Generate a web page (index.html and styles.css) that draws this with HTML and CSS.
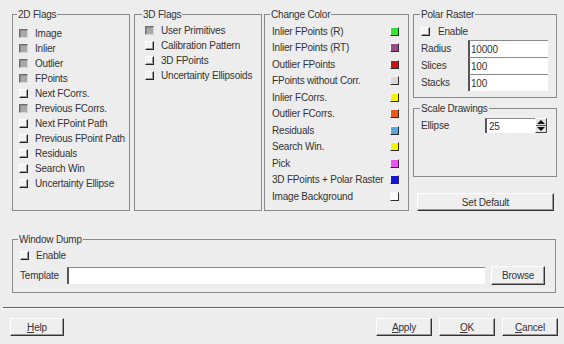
FILE: index.html
```html
<!DOCTYPE html>
<html lang="en">
<head>
    <meta charset="UTF-8">
    <meta name="viewport" content="width=device-width, initial-scale=1.0">
    <title>Drawing Options</title>
    <link rel="stylesheet" href="styles.css">
</head>
<body>
<div class="dialog">
    <div class="top">
        <fieldset class="group flags2d">
            <legend>2D Flags</legend>
            <div class="list">
                <div class="row"><span class="cb on"></span>Image</div>
                <div class="row"><span class="cb on"></span>Inlier</div>
                <div class="row"><span class="cb on"></span>Outlier</div>
                <div class="row"><span class="cb on"></span>FPoints</div>
                <div class="row"><span class="cb"></span>Next FCorrs.</div>
                <div class="row"><span class="cb on"></span>Previous FCorrs.</div>
                <div class="row"><span class="cb"></span>Next FPoint Path</div>
                <div class="row"><span class="cb"></span>Previous FPoint Path</div>
                <div class="row"><span class="cb"></span>Residuals</div>
                <div class="row"><span class="cb"></span>Search Win</div>
                <div class="row"><span class="cb"></span>Uncertainty Ellipse</div>
            </div>
        </fieldset>

        <fieldset class="group flags3d">
            <legend>3D Flags</legend>
            <div class="list">
                <div class="row"><span class="cb on"></span>User Primitives</div>
                <div class="row"><span class="cb"></span>Calibration Pattern</div>
                <div class="row"><span class="cb"></span>3D FPoints</div>
                <div class="row"><span class="cb"></span>Uncertainty Ellipsoids</div>
            </div>
        </fieldset>

        <fieldset class="group colors">
            <legend>Change Color</legend>
            <div class="list">
                <div class="crow">Inlier FPoints (R)<span class="sw" style="background:#33e533"></span></div>
                <div class="crow">Inlier FPoints (RT)<span class="sw" style="background:#984a88"></span></div>
                <div class="crow">Outlier FPoints<span class="sw" style="background:#c81414"></span></div>
                <div class="crow">FPoints without Corr.<span class="sw" style="background:#d9d9d9"></span></div>
                <div class="crow">Inlier FCorrs.<span class="sw" style="background:#f4f400"></span></div>
                <div class="crow">Outlier FCorrs.<span class="sw" style="background:#e65a1e"></span></div>
                <div class="crow">Residuals<span class="sw" style="background:#5ca6de"></span></div>
                <div class="crow">Search Win.<span class="sw" style="background:#f4f400"></span></div>
                <div class="crow">Pick<span class="sw" style="background:#ec52ec"></span></div>
                <div class="crow">3D FPoints + Polar Raster<span class="sw" style="background:#1212dc"></span></div>
                <div class="crow">Image Background<span class="sw" style="background:#ffffff"></span></div>
            </div>
        </fieldset>

        <div class="side">
            <fieldset class="group polar">
                <legend>Polar Raster</legend>
                <div class="list">
                    <div class="row tall"><span class="cb"></span>Enable</div>
                    <div class="field"><label>Radius</label><input class="edit" type="text" value="10000"></div>
                    <div class="field"><label>Slices</label><input class="edit" type="text" value="100"></div>
                    <div class="field"><label>Stacks</label><input class="edit" type="text" value="100"></div>
                </div>
            </fieldset>

            <fieldset class="group scale">
                <legend>Scale Drawings</legend>
                <div class="list">
                    <div class="field short">
                        <label>Ellipse</label>
                        <div class="spin">
                            <input class="edit" type="text" value="25">
                            <svg class="arrows" width="12" height="15" viewBox="0 0 12 15">
                                <rect x="0" y="0" width="12" height="15" fill="#e2e2e2"/>
                                <path d="M0.5 14.5 V0.5 H11.5" fill="none" stroke="#ffffff"/>
                                <path d="M11.5 0.5 V14.5 H0.5" fill="none" stroke="#444444"/>
                                <line x1="1" y1="7.5" x2="11" y2="7.5" stroke="#555555"/>
                                <path d="M2 6 L6 2 L10 6 Z" fill="#111111"/>
                                <path d="M2 9 L6 13 L10 9 Z" fill="#111111"/>
                            </svg>
                        </div>
                    </div>
                </div>
            </fieldset>

            <button class="btn setdef">Set Default</button>
        </div>
    </div>

    <fieldset class="group dump">
        <legend>Window Dump</legend>
        <div class="list">
            <div class="row"><span class="cb"></span>Enable</div>
            <div class="field wide">
                <label>Template</label>
                <input class="edit grow" type="text" value="">
                <button class="btn browse">Browse</button>
            </div>
        </div>
    </fieldset>

    <div class="sep"></div>

    <div class="footer">
        <button class="btn"><u>H</u>elp</button>
        <div class="spacer"></div>
        <button class="btn"><u>A</u>pply</button>
        <button class="btn"><u>O</u>K</button>
        <button class="btn"><u>C</u>ancel</button>
    </div>
</div>
</body>
</html>
```

FILE: styles.css
```css
body {
    margin: 0;
    background: #ededed;
    font-family: "Liberation Sans", Arial, sans-serif;
    font-size: 10px;
    letter-spacing: -0.2px;
    color: #333;
}
.dialog {
    width: 564px;
    height: 344px;
    padding-top: 8px;
    box-sizing: border-box;
}
.top {
    display: flex;
    height: 203px;
    padding-left: 12px;
}

/* group boxes */
.group {
    margin: 0;
    padding: 0;
    min-width: 0;
    border: 1px solid #8a8a8a;
    box-sizing: border-box;
}
.group legend {
    margin-left: 5px;
    padding: 0 1px;
    line-height: 13px;
}
.flags2d {
    width: 118px;
    margin-right: 4px;
}
.flags2d legend {
    margin-left: 4px;
}
.flags2d .list {
    padding: 5px 0 0 6px;
}
.flags3d {
    width: 128px;
    margin-right: 2px;
}
.flags3d legend {
    margin-left: 7px;
}
.flags3d .list {
    padding: 1.5px 0 0 10px;
}
.colors {
    width: 145px;
    margin-right: 4px;
}
.colors .list {
    padding: 2px 9px 0 7px;
}
.side {
    width: 144px;
    display: flex;
    flex-direction: column;
}
.polar legend, .scale legend {
    margin-left: 6px;
}
.polar .list {
    padding: 2px 7px 6px 7px;
}
.scale {
    margin-top: 4px;
}
.scale .list {
    padding: 3px 7px 43px 7px;
}

/* rows */
.row {
    display: flex;
    align-items: center;
    height: 15px;
    white-space: nowrap;
}
.row.tall {
    height: 17px;
}
.polar .cb {
    margin-right: 8px;
}
.cb {
    flex: none;
    width: 9px;
    height: 9px;
    margin-right: 7px;
    box-sizing: border-box;
    background: #f3f3f3;
    border: 1px solid;
    border-color: #ffffff #222222 #222222 #ffffff;
    box-shadow: inset -1px -1px #9c9c9c;
}
.cb.on {
    background: #a9a9a9;
    border-color: #6c6c6c #d6d6d6 #d6d6d6 #6c6c6c;
    box-shadow: inset 1px 1px #8e8e8e;
}
.crow {
    display: flex;
    align-items: center;
    justify-content: space-between;
    height: 16.5px;
    white-space: nowrap;
}
.sw {
    flex: none;
    width: 9px;
    height: 9px;
    box-sizing: border-box;
    border: 1px solid;
    border-color: #f4f4f4 #2a2a2a #2a2a2a #f4f4f4;
}

/* fields */
.field {
    display: flex;
    align-items: center;
    height: 17px;
}
.field label {
    width: 47px;
    flex: none;
}
.edit {
    width: 80px;
    height: 17px;
    margin: 0;
    padding: 0 0 0 1px;
    box-sizing: border-box;
    font: inherit;
    letter-spacing: inherit;
    color: #333;
    background: #ffffff;
    border: 0;
    border-left: 2px solid #555;
    border-top: 1px solid #8a8a8a;
    outline: none;
}
.field.short {
    height: 15px;
}
.field.short label {
    width: 64px;
}
.spin {
    display: flex;
    width: 62px;
    height: 15px;
}
.spin .edit {
    width: 50px;
    height: 15px;
    padding-left: 2px;
}
.arrows {
    display: block;
    flex: none;
}
.field.wide {
    height: 19px;
    margin-top: 3px;
    padding-right: 10px;
}
.dump .list {
    padding: 2px 0 7px 7px;
}
.edit.grow {
    flex: 1;
    width: auto;
}

/* buttons */
.btn {
    height: 18px;
    margin: 0;
    padding: 0;
    font: inherit;
    letter-spacing: inherit;
    color: #333;
    background: #efefef;
    border: 1px solid;
    border-color: #ffffff #333333 #333333 #ffffff;
    box-shadow: inset -1px -1px #9a9a9a;
    width: 56px;
}
.setdef {
    width: auto;
    margin: 16px 3px 0 4px;
}
.browse {
    width: 54px;
    height: 19px;
    margin-left: 6px;
    flex: none;
}
.dump {
    margin: 22px 8px 0 12px;
}
.sep {
    height: 0;
    margin: 14px 0 0 3px;
    border-top: 1px solid #606060;
    border-bottom: 1px solid #fafafa;
}
.footer {
    display: flex;
    gap: 7px;
    margin-top: 9px;
    padding: 0 6px 0 10px;
}
.footer .btn:first-child {
    width: 54px;
}
.spacer {
    flex: 1;
}
```
